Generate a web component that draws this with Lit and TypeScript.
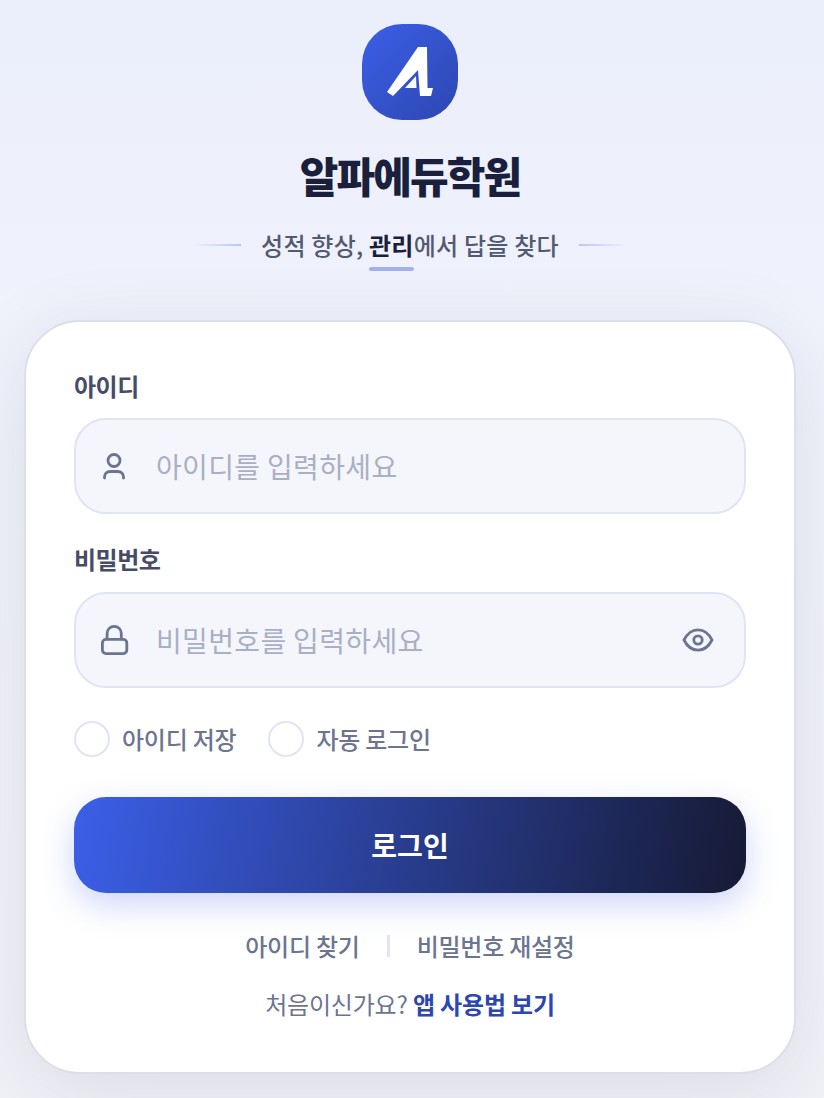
import { html, css, LitElement } from 'lit';
import { customElement } from 'lit/decorators.js';

@customElement('app-root')
export class AppRoot extends LitElement {
  render() {
    return html`
      <div class="page">
        <header class="brand">
          <div class="logo">
            <svg width="96" height="96" viewBox="0 0 96 96" fill="#fff">
              <path d="M25 68 L56 23 L65 23 L65.500 64 L71 64 L69 72 L58 72 L56 46 L31 72 Z" />
              <path d="M43 64 L54 52 L54.500 64 Z" />
            </svg>
          </div>
          <h1>알파에듀학원</h1>
          <div class="tagline">
            <span class="line left"></span>
            <p>성적 향상, <strong>관리</strong>에서 답을 찾다</p>
            <span class="line right"></span>
          </div>
        </header>

        <main class="card">
          <label class="label">아이디</label>
          <div class="field">
            <svg class="icon" width="32" height="32" viewBox="0 0 32 32" fill="none" stroke="#6b7490" stroke-width="2.800" stroke-linecap="round">
              <circle cx="16" cy="10.500" r="6" />
              <path d="M6.500 28 v-1 a5.500 5.500 0 0 1 5.500 -5.500 h8 a5.500 5.500 0 0 1 5.500 5.500 v1" />
            </svg>
            <span class="placeholder">아이디를 입력하세요</span>
          </div>

          <label class="label second">비밀번호</label>
          <div class="field">
            <svg class="icon" width="32" height="32" viewBox="0 0 32 32" fill="none" stroke="#6b7490" stroke-width="2.800" stroke-linecap="round" stroke-linejoin="round">
              <rect x="4.400" y="15.400" width="24.400" height="14.200" rx="3.500" />
              <path d="M9.100 15 v-5.600 a7.100 7.100 0 0 1 14.200 0 v5.600" />
            </svg>
            <span class="placeholder">비밀번호를 입력하세요</span>
            <svg class="eye" width="32" height="32" viewBox="0 0 32 32" fill="none" stroke="#6b7490" stroke-width="2.800" stroke-linejoin="round">
              <path d="M2 16 C5.500 9 10.500 5.800 16 5.800 S26.500 9 30 16 C26.500 23 21.500 26.200 16 26.200 S5.500 23 2 16 Z" />
              <circle cx="16" cy="16" r="4.200" />
            </svg>
          </div>

          <div class="options">
            <div class="option"><span class="check"></span>아이디 저장</div>
            <div class="option"><span class="check"></span>자동 로그인</div>
          </div>

          <button class="submit">로그인</button>

          <nav class="links">
            <a>아이디 찾기</a>
            <span class="divider"></span>
            <a>비밀번호 재설정</a>
          </nav>
          <p class="first">처음이신가요? <a>앱 사용법 보기</a></p>
        </main>
      </div>
    `;
  }

  static styles = css`
    :host {
      display: block;
      font-family: 'Noto Sans CJK KR', 'Noto Sans', sans-serif;
      color: #1a1f3c;
    }

    .page {
      box-sizing: border-box;
      height: 1098px;
      overflow: hidden;
      padding: 24px 28px 0 24px;
      background: linear-gradient(180deg, #ebeffb 0%, #f0f2fc 30%, #f1f2f8 100%);
    }

    .brand {
      display: flex;
      flex-direction: column;
      align-items: center;
    }

    .logo {
      width: 96px;
      height: 96px;
      border-radius: 40px;
      background: linear-gradient(135deg, #3b5fe8, #2d46b0);
      margin-bottom: 26px;
    }

    .logo svg {
      display: block;
    }

    h1 {
      margin: 0;
      font-size: 42px;
      line-height: 58px;
      font-weight: 800;
      letter-spacing: -0.045em;
      color: #1a1f3c;
    }

    .tagline {
      display: flex;
      align-items: center;
      gap: 20px;
      margin-top: 23px;
    }

    .tagline p {
      margin: 0;
      font-size: 24px;
      line-height: 36px;
      font-weight: 500;
      letter-spacing: 0.01em;
      color: #535970;
      white-space: nowrap;
    }

    .tagline strong {
      position: relative;
      display: inline-block;
      font-weight: 700;
      color: #1a1f3c;
    }

    .tagline strong::after {
      content: '';
      position: absolute;
      left: 0;
      right: 0;
      bottom: -8px;
      height: 4px;
      border-radius: 2px;
      background: #9fb1f0;
    }

    .line {
      width: 48px;
      height: 2px;
      background: linear-gradient(90deg, transparent, #b9c6f5);
    }

    .line.right {
      background: linear-gradient(90deg, #b9c6f5, transparent);
    }

    .card {
      box-sizing: border-box;
      width: 772px;
      height: 754px;
      margin-top: 57px;
      padding: 48px 48px 0;
      border: 2px solid #dcdfe8;
      border-radius: 56px;
      background: #fff;
      box-shadow: 0 16px 80px rgba(26, 26, 46, 0.1);
    }

    .label {
      display: block;
      font-size: 24px;
      line-height: 32px;
      font-weight: 700;
      letter-spacing: -0.02em;
      color: #474c66;
      margin-bottom: 16px;
    }

    .label.second {
      margin-top: 29px;
      margin-bottom: 17px;
    }

    .field {
      box-sizing: border-box;
      display: flex;
      align-items: center;
      height: 96px;
      padding: 0 30px 0 22px;
      border: 2px solid #e0e4f4;
      border-radius: 32px;
      background: #f4f6fc;
    }

    .icon {
      flex: none;
    }

    .placeholder {
      flex: 1;
      margin-left: 26px;
      font-size: 28px;
      font-weight: 400;
      letter-spacing: 0.012em;
      color: #a9afc4;
    }

    .options {
      display: flex;
      gap: 32px;
      margin-top: 33px;
    }

    .option {
      display: flex;
      align-items: center;
      gap: 12px;
      font-size: 24px;
      line-height: 36px;
      font-weight: 500;
      letter-spacing: -0.01em;
      color: #6c7590;
    }

    .check {
      box-sizing: border-box;
      width: 36px;
      height: 36px;
      border: 2px solid #e0e4f4;
      border-radius: 50%;
      background: #fff;
    }

    .submit {
      display: block;
      width: 100%;
      height: 96px;
      margin-top: 40px;
      border: 0;
      border-radius: 32px;
      background: linear-gradient(100deg, #3b5fe8 0%, #161a34 100%);
      box-shadow: 0 12px 32px rgba(59, 95, 232, 0.25);
      color: #fff;
      font: inherit;
      font-size: 28px;
      font-weight: 700;
      letter-spacing: 0;
    }

    .links {
      display: flex;
      justify-content: center;
      align-items: center;
      gap: 27px;
      margin-top: 35px;
      font-size: 24px;
      line-height: 36px;
      font-weight: 500;
      letter-spacing: -0.01em;
      color: #6c7590;
    }

    .divider {
      width: 3px;
      height: 22px;
      background: #e0e4f4;
    }

    .first {
      margin: 22px 0 0;
      text-align: center;
      font-size: 24px;
      line-height: 36px;
      letter-spacing: -0.0075em;
      color: #6c7590;
    }

    .first a {
      font-weight: 700;
      color: #2d46b0;
    }
  `;
}
